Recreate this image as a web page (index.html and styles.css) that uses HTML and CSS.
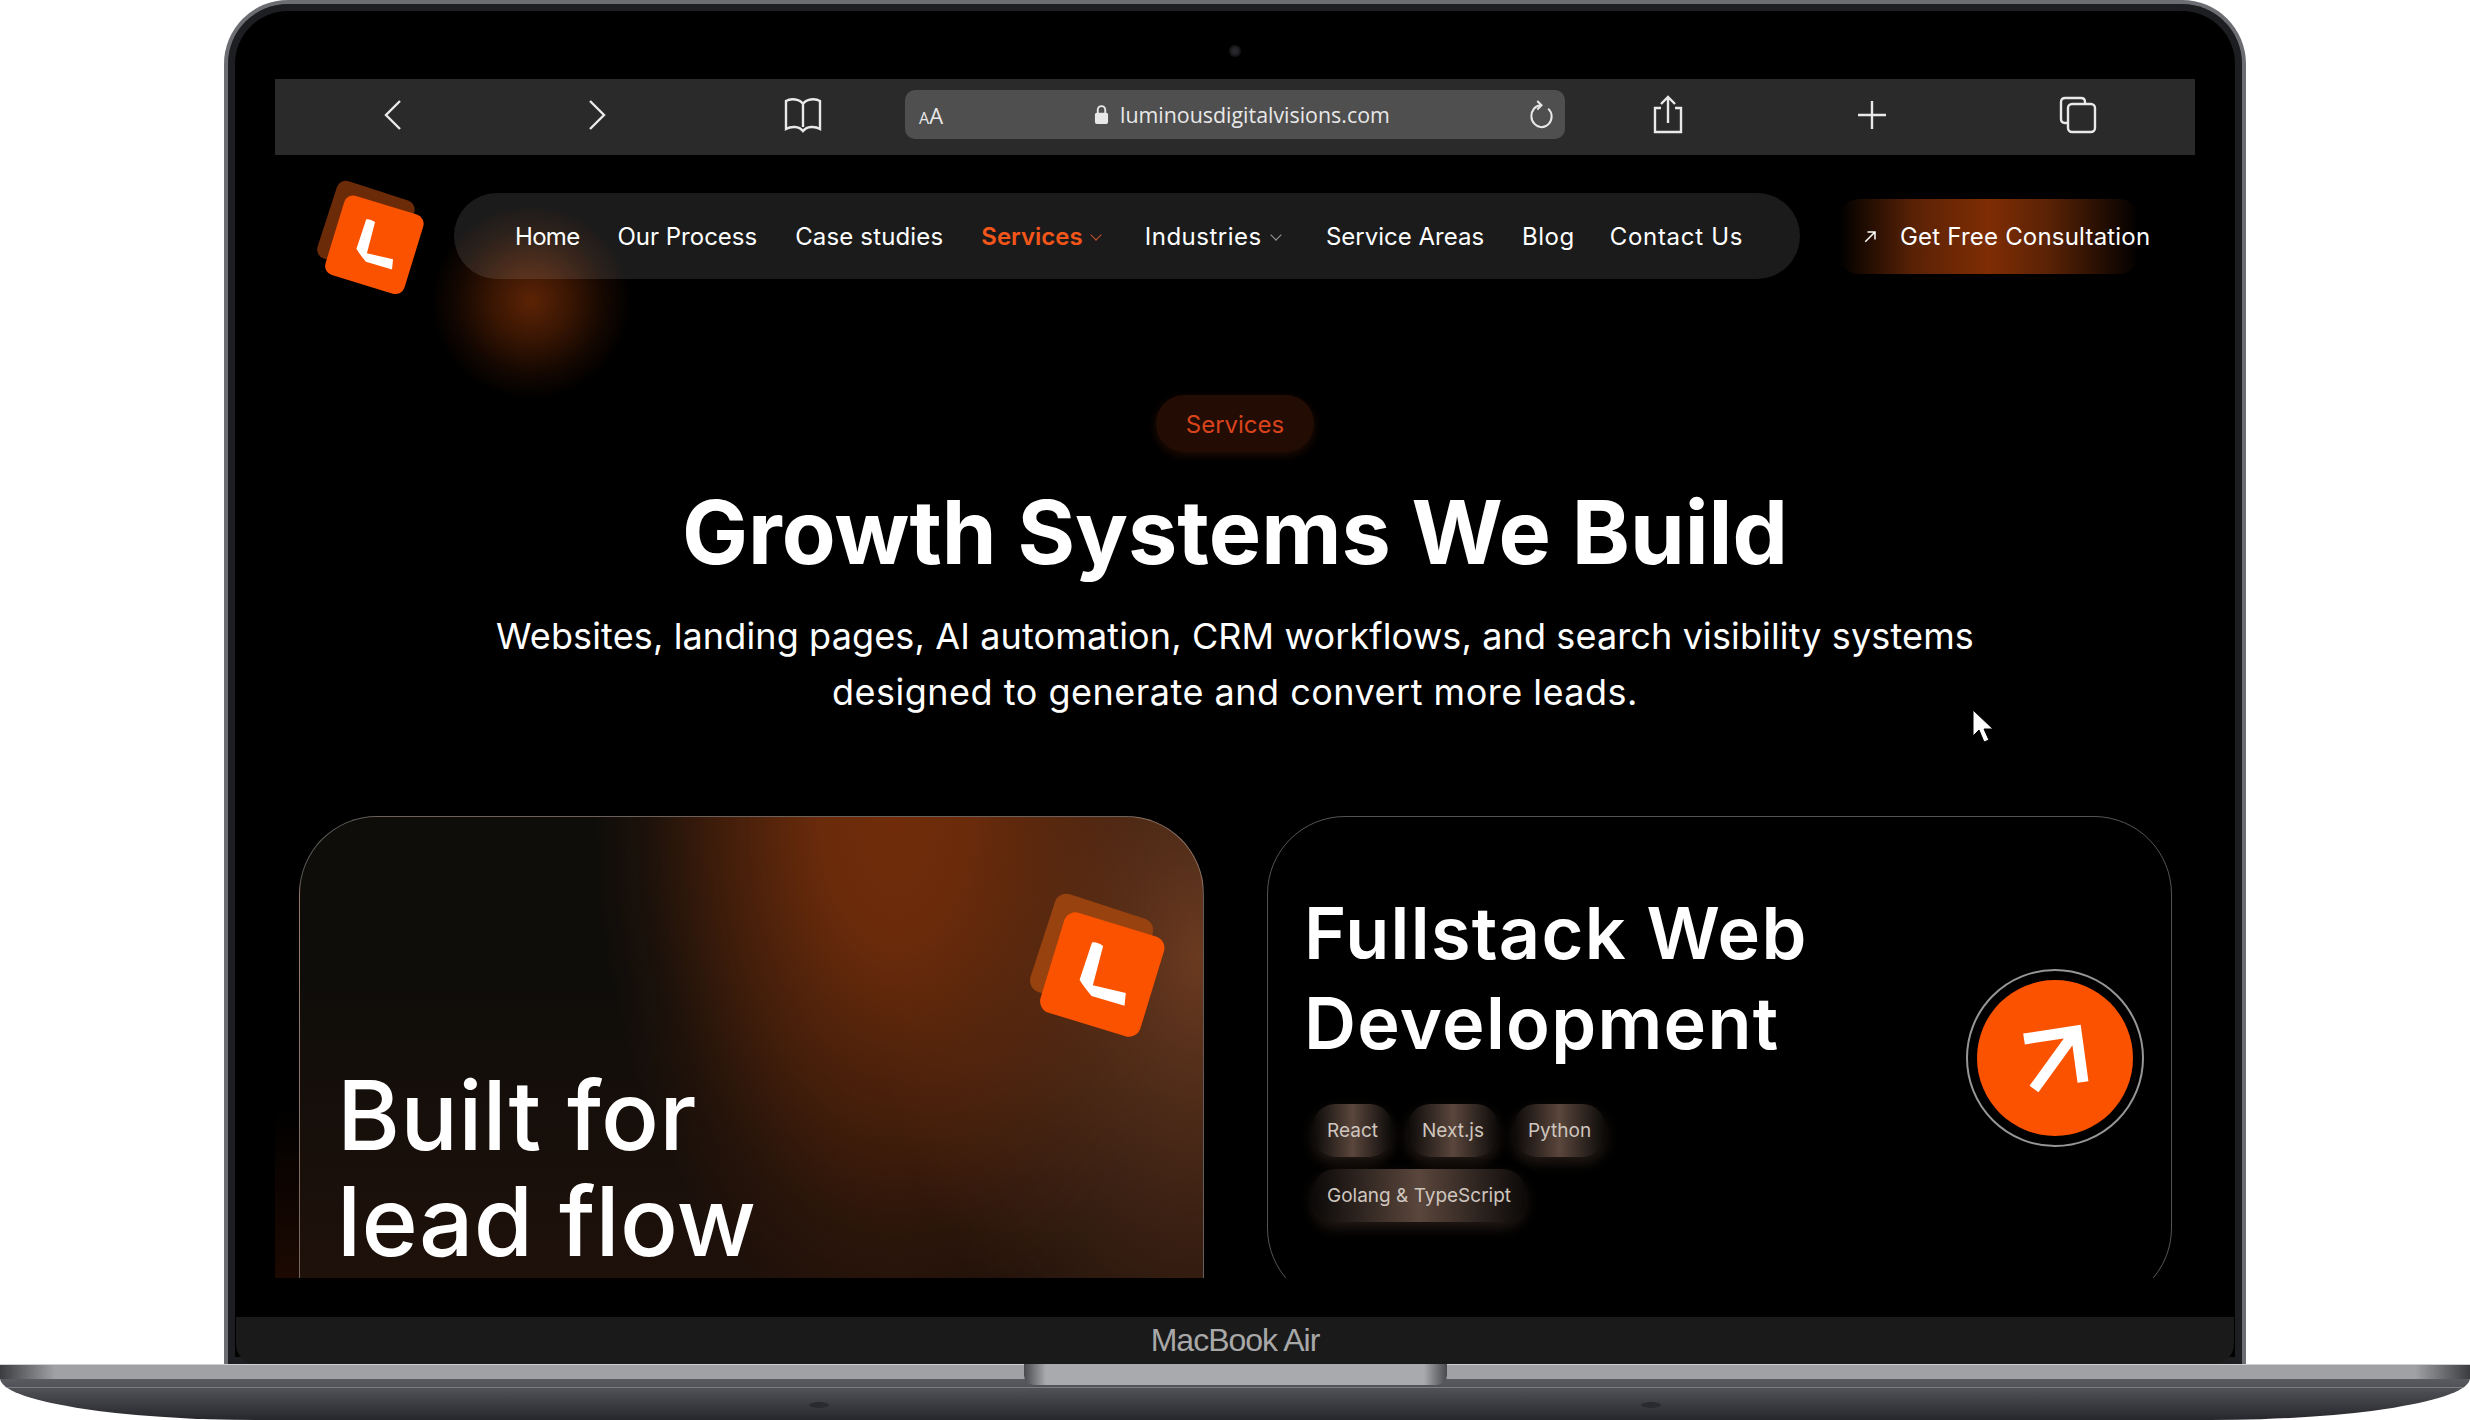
FILE: index.html
```html
<!DOCTYPE html>
<html>
    <head>
        <meta charset="utf-8">
        <title>Luminous Digital Visions</title>
        <link rel="stylesheet" href="styles.css">
    </head>
    <body>
        <div class="lid">
            <div class="camera-row"><div class="camera"></div></div>

            <!-- safari toolbar -->
            <div class="toolbar">
                <svg class="tb-icon" viewBox="0 0 40 40"><path d="M27 6 L13 20 L27 34"/></svg>
                <svg class="tb-icon gap-forward" viewBox="0 0 40 40"><path d="M13 6 L27 20 L13 34"/></svg>
                <svg class="tb-icon gap-book" viewBox="0 0 40 40"><path d="M20 9 C17 4 8 3 3 6 V34 C8 31 16 31 20 36 C24 31 32 31 37 34 V6 C32 3 23 4 20 9 Z M20 9 V32"/></svg>
                <div class="address">
                    <span class="aa"><small>A</small>A</span>
                    <div class="url">
                        <svg class="lock" viewBox="0 0 16 22"><path d="M4 10 V6 a4 4 0 0 1 8 0 V10" fill="none" stroke="#e8e8e8" stroke-width="2"/><rect x="1" y="9" width="14" height="12" rx="2" fill="#e8e8e8"/></svg>
                        <span>luminousdigitalvisions.com</span>
                    </div>
                    <svg class="reload" viewBox="0 0 32 34"><path d="M15 6 C9 6 4 12 4 19 C4 26 10 32 16 32 C23 32 28 26 28 19 C28 15 26 12 24 10"/><path d="M11 1 L16 6 L11 11"/></svg>
                </div>
                <svg class="tb-icon gap-share" viewBox="0 0 40 40"><path d="M13 13 H7 V37 H33 V13 H27 M20 28 V2 M13 9 L20 2 L27 9"/></svg>
                <svg class="tb-icon gap-plus" viewBox="0 0 40 40"><path d="M20 6 V34 M6 20 H34"/></svg>
                <svg class="tb-icon gap-tabs" viewBox="0 0 40 40"><path d="M9 28 H7 Q3 28 3 24 V7 Q3 3 7 3 H23 Q27 3 27 7 V9"/><rect x="10" y="9" width="27" height="28" rx="4"/></svg>
            </div>

            <!-- the website -->
            <div class="site">
                <div class="nav-glow"></div>
                <div class="side-glow"></div>

                <header class="topbar">
                    <svg class="logo" viewBox="0 0 360 360">
                        <rect class="logo-back" x="45" y="35" width="240" height="240" rx="28" transform="rotate(18 165 155)"/>
                        <rect class="logo-front" x="68" y="78" width="244" height="244" rx="28" transform="rotate(17 190 200)"/>
                        <path class="logo-mark" d="M166 125 Q176 122 192 133 L168 225 L245 243 L242 273 L165 250 Q144 225 137 212 Z"/>
                    </svg>
                    <nav class="nav">
                        <a class="nav-link ls-home">Home</a>
                        <a class="nav-link">Our Process</a>
                        <a class="nav-link ls-case">Case studies</a>
                        <a class="nav-link active">Services <i class="chev"></i></a>
                        <a class="nav-link ls-industries">Industries <i class="chev"></i></a>
                        <a class="nav-link">Service Areas</a>
                        <a class="nav-link ls-blog">Blog</a>
                        <a class="nav-link ls-contact">Contact Us</a>
                    </nav>
                    <a class="cta">
                        <svg class="cta-arrow" viewBox="0 0 20 20"><path d="M3 17 L16 4 M6 4 H16 V14"/></svg>
                        <span>Get Free Consultation</span>
                    </a>
                </header>

                <section class="hero">
                    <span class="badge">Services</span>
                    <h1>Growth Systems We Build</h1>
                    <p>Websites, landing pages, AI automation, CRM workflows, and search visibility systems<br><span class="line-two">designed to generate and convert more leads.</span></p>
                </section>

                <svg class="cursor" viewBox="0 0 24 36"><path d="M1 1 V27 L7 21 L12 33 L17 31 L12 20 L21 20 Z" fill="#fff" stroke="#000" stroke-width="1"/></svg>

                <section class="cards">
                    <div class="card card-left">
                        <svg class="card-logo" viewBox="0 0 360 360">
                            <rect class="logo-back-soft" x="45" y="35" width="240" height="240" rx="28" transform="rotate(18 165 155)"/>
                            <rect class="logo-front" x="68" y="78" width="244" height="244" rx="28" transform="rotate(17 190 200)"/>
                            <path class="logo-mark" d="M166 125 Q176 122 192 133 L168 225 L245 243 L242 273 L165 250 Q144 225 137 212 Z"/>
                        </svg>
                        <h2>Built for<br>lead flow</h2>
                    </div>
                    <div class="card card-right">
                        <div class="card-text">
                            <h3>Fullstack Web<br>Development</h3>
                            <div class="chips">
                                <span class="chip">React</span>
                                <span class="chip">Next.js</span>
                                <span class="chip">Python</span>
                                <span class="chip">Golang &amp; TypeScript</span>
                            </div>
                        </div>
                        <div class="go-ring">
                            <div class="go">
                                <svg viewBox="0 0 100 100"><path d="M19 31 L71 23 L78 74 M71 23 L29 81"/></svg>
                            </div>
                        </div>
                    </div>
                </section>
            </div>

            <div class="chin">MacBook Air</div>
        </div>

        <div class="base">
            <div class="base-top"></div>
            <div class="notch"></div>
            <div class="foot foot-l"></div>
            <div class="foot foot-r"></div>
        </div>
    </body>
</html>
```

FILE: styles.css
```css
html, body {
    margin: 0;
    padding: 0;
    height: 1420px;
    overflow: hidden;
    background: #fff;
    font-family: "Inter", "Liberation Sans", sans-serif;
}

/* laptop lid */
.lid {
    box-sizing: border-box;
    width: 2022px;
    height: 1364px;
    margin: 0 auto;
    padding: 0;
    background: #000;
    border: 4px solid #6c6d72;
    border-bottom: none;
    border-radius: 64px 64px 0 0;
    box-shadow: inset 0 0 0 7px #1d1e21;
    overflow: hidden;
    display: flex;
    flex-direction: column;
    align-items: center;
}
.camera-row {
    height: 75px;
    width: 100%;
    padding-top: 41px;
    box-sizing: border-box;
    display: flex;
    justify-content: center;
}
.camera {
    width: 12px;
    height: 12px;
    border-radius: 50%;
    background: radial-gradient(circle, #26262a 0 30%, #151517 60%);
}

/* browser toolbar */
.toolbar {
    box-sizing: border-box;
    width: 1920px;
    height: 76px;
    padding: 0 0 5px 98px;
    background: #2a2a2a;
    display: flex;
    align-items: center;
    flex-shrink: 0;
}
.tb-icon {
    width: 40px;
    height: 40px;
    flex-shrink: 0;
    fill: none;
    stroke: #e9e9e9;
    stroke-width: 2.4;
}
.gap-forward { margin-left: 164px; }
.gap-book { margin-left: 166px; }
.gap-share { margin-left: 83px; }
.gap-plus { margin-left: 164px; }
.gap-tabs { margin-left: 166px; }
.address {
    box-sizing: border-box;
    width: 660px;
    height: 49px;
    margin-left: 82px;
    padding: 0 10px 0 14px;
    background: #4f4f4f;
    border-radius: 10px;
    display: flex;
    align-items: center;
    color: #e8e8e8;
}
.aa {
    font-family: "Open Sans", sans-serif;
    font-size: 22px;
    width: 160px;
}
.aa small { font-size: 16px; }
.url {
    flex: 1;
    display: flex;
    align-items: center;
    font-family: "Open Sans", sans-serif;
    font-size: 21.4px;
    margin-left: 15px;
}
.lock {
    width: 15px;
    height: 21px;
    margin-right: 11px;
}
.reload {
    width: 27px;
    height: 31px;
    fill: none;
    stroke: #e8e8e8;
    stroke-width: 2.4;
    overflow: visible;
}

/* site */
.site {
    position: relative;
    width: 1920px;
    height: 1123px;
    overflow: hidden;
    flex-shrink: 0;
    color: #fff;
}
.nav-glow {
    position: absolute;
    left: 156px;
    top: 48px;
    width: 200px;
    height: 196px;
    background: radial-gradient(closest-side, #5c2305 0%, #3a1603 38%, #160801 72%, transparent 100%);
}
.side-glow {
    position: absolute;
    left: 0;
    top: 950px;
    width: 24px;
    height: 173px;
    background: linear-gradient(to bottom, transparent, #1c0902 100%);
}
.topbar {
    position: relative;
    display: flex;
    align-items: flex-start;
    height: 190px;
}
.logo {
    width: 122px;
    height: 122px;
    margin: 22px 0 0 35px;
    flex-shrink: 0;
}
.logo-back { fill: #6b2a08; }
.logo-back-soft { fill: #97420f; }
.logo-front { fill: #fb5200; }
.logo-mark { fill: #fff; }
.nav {
    box-sizing: border-box;
    width: 1346px;
    height: 86px;
    margin: 38px 0 0 22px;
    padding-left: 61px;
    background: rgba(255, 255, 255, 0.105);
    border-radius: 43px;
    display: flex;
    align-items: center;
    font-size: 24px;
    flex-shrink: 0;
}
.nav-link {
    color: #fff;
    white-space: nowrap;
    margin-right: 38px;
}
.ls-home { letter-spacing: -0.7px; }
.ls-case { letter-spacing: 0.15px; }
.ls-industries { letter-spacing: 0.5px; margin-right: 44px; }
.ls-blog { letter-spacing: 0.5px; margin-right: 35px; }
.ls-contact { letter-spacing: 0.7px; }
.nav-link.active {
    color: #f4561a;
    font-weight: 600;
    margin-right: 43px;
}
.chev {
    display: inline-block;
    width: 7px;
    height: 7px;
    margin: 0 2px 6px 3px;
    border-right: 1.5px solid #999;
    border-bottom: 1.5px solid #999;
    transform: rotate(45deg);
}
.active .chev { border-color: #c4532a; }
.cta {
    box-sizing: border-box;
    width: 300px;
    height: 75px;
    margin: 44px 0 0 39px;
    padding-left: 24px;
    display: flex;
    align-items: center;
    white-space: nowrap;
    font-size: 24px;
    letter-spacing: 0.2px;
    background: linear-gradient(to right, #000 0%, #5a2205 25%, #7f2d04 50%, #5a2205 70%, #000 100%);
    border-radius: 20px;
}
.cta-arrow {
    width: 15px;
    height: 15px;
    margin-right: 22px;
    flex-shrink: 0;
    fill: none;
    stroke: #fff;
    stroke-width: 2;
}

.hero {
    position: relative;
    text-align: center;
    height: 471px;
}
.badge {
    display: inline-block;
    margin-top: 50px;
    padding: 0 30px;
    height: 57px;
    line-height: 59px;
    font-size: 24px;
    color: #d9431b;
    background: #220c04;
    border-radius: 28px;
    box-shadow: 0 3px 10px #220c04;
}
.hero h1 {
    margin: 25px 0 0;
    font-size: 88px;
    line-height: 110px;
    font-weight: 700;
}
.hero p {
    margin: 21px 0 0;
    font-size: 36px;
    line-height: 56px;
    letter-spacing: 0.13px;
}
.line-two { letter-spacing: 0.5px; }
.cursor {
    position: absolute;
    left: 1697px;
    top: 554px;
    width: 24px;
    height: 36px;
}

/* cards */
.cards {
    position: relative;
    display: flex;
    align-items: flex-start;
    gap: 63px;
    padding-left: 24px;
}
.card {
    box-sizing: border-box;
    width: 905px;
    height: 560px;
    border: 1.5px solid rgba(255, 255, 255, 0.33);
    border-radius: 78px;
    flex-shrink: 0;
}
.card-left {
    position: relative;
    background:
        radial-gradient(ellipse 300px 520px at 66% 0%, #702c0a 0%, #6a2b0b 25%, rgba(106, 43, 11, 0.55) 58%, rgba(106, 43, 11, 0.16) 82%, rgba(106, 43, 11, 0) 100%),
        radial-gradient(ellipse 330px 440px at 100% 25%, #6b3a20 0%, rgba(107, 58, 32, 0) 100%),
        linear-gradient(to bottom, #0f0d0a 30%, #24120a 100%);
}
.card-logo {
    position: absolute;
    left: 721px;
    top: 72px;
    width: 154px;
    height: 154px;
}
.card-left h2 {
    margin: 0;
    position: absolute;
    left: 37px;
    top: 245px;
    font-size: 96px;
    line-height: 106px;
    font-weight: 500;
    letter-spacing: 0.2px;
}
.card-right {
    height: 490px;
    display: flex;
    justify-content: space-between;
    padding: 71px 27px 0 36px;
}
.card-text { width: 700px; }
.card-right h3 {
    margin: 0;
    font-size: 72px;
    line-height: 90px;
    font-weight: 600;
    letter-spacing: 1.3px;
}
.chips {
    width: 330px;
    display: flex;
    flex-wrap: wrap;
    gap: 12px 16px;
    margin: 36px 0 0 9px;
}
.chip {
    box-sizing: border-box;
    height: 53px;
    line-height: 53px;
    padding: 0 14px;
    font-size: 19px;
    color: #cfc6bf;
    background: linear-gradient(to right, #0c0a09, #5a463c 50%, #0c0a09);
    border-radius: 22px;
    box-shadow: 0 6px 14px rgba(70, 52, 42, 0.5);
    white-space: nowrap;
}
.go-ring {
    box-sizing: border-box;
    width: 178px;
    height: 178px;
    margin-top: 81px;
    padding: 9px;
    border: 2.5px solid #969696;
    border-radius: 50%;
    flex-shrink: 0;
}
.go {
    width: 100%;
    height: 100%;
    background: #fb5200;
    border-radius: 50%;
    display: flex;
    align-items: center;
    justify-content: center;
}
.go svg {
    width: 100px;
    height: 100px;
    fill: none;
    stroke: #fff;
    stroke-width: 11;
}

/* bottom of the lid */
.chin {
    box-sizing: border-box;
    width: 1998px;
    height: 47px;
    margin-top: 39px;
    background: #1a1a1b;
    border-radius: 0 0 20px 20px;
    text-align: center;
    line-height: 47px;
    font-family: "Liberation Sans", sans-serif;
    font-size: 32px;
    letter-spacing: -1px;
    color: #a8a8a8;
    flex-shrink: 0;
}

/* laptop base */
.base {
    position: relative;
    height: 56px;
    background: linear-gradient(to bottom, #6a6b70 0%, #4f5056 45%, #26272c 100%);
    border-radius: 0 0 260px 260px / 0 0 42px 42px;
    overflow: hidden;
}
.base::after {
    content: "";
    position: absolute;
    left: 0;
    right: 0;
    top: 23px;
    height: 1px;
    background: #7c7d82;
}
.base-top {
    height: 15px;
    background: linear-gradient(to right, #3b3c40 0, #a0a1a5 55px, #a0a1a5 calc(100% - 55px), #3b3c40 100%);
    border-top: 1px solid #cfd0d2;
    box-sizing: border-box;
}
.notch {
    position: absolute;
    left: 1024px;
    top: 0;
    width: 423px;
    height: 21px;
    background: linear-gradient(to right, #48494d 0, #a9aaae 22px, #a9aaae 400px, #48494d 100%);
    border-radius: 0 0 10px 10px;
    z-index: 1;
}
.foot {
    position: absolute;
    top: 38px;
    width: 20px;
    height: 6px;
    border-radius: 50%;
    background: #2a2b2f;
}
.foot-l { left: 809px; }
.foot-r { left: 1641px; }
```
